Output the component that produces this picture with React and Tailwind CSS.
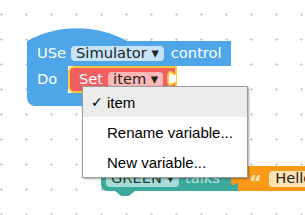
import React from "react";

const blockFont = "font-['DejaVu_Sans',sans-serif] text-[14.67px] leading-none";

function Grid() {
  return (
    <svg className="absolute inset-0" width="305" height="215">
      <defs>
        <pattern id="dots" x="-11" y="2" width="25" height="25" patternUnits="userSpaceOnUse">
          <rect x="11" y="12" width="3" height="1" fill="#cfcfcf" />
          <rect x="12" y="11" width="1" height="3" fill="#cfcfcf" />
        </pattern>
      </defs>
      <rect width="305" height="215" fill="url(#dots)" />
    </svg>
  );
}

function SetBlock() {
  return (
    <div className="relative flex h-[27px] w-[109px] items-center rounded-l-[6px] border-2 border-[#fdc93c] bg-[#ef5f5f] pl-[9px] text-white">
      <span>Set</span>
      <span className="ml-[5px] flex h-[15px] items-center rounded-[4px] bg-[#f8b8b6] px-[5px] text-[#222]">
        item&nbsp;▾
      </span>
      <svg className="absolute right-[-3px] top-[-2px]" width="12" height="27">
        <path d="M10 5 C10 15 2 -3 2 12.5 S10 10 10 20" fill="#fff" stroke="#fdc93c" strokeWidth="2" />
      </svg>
    </div>
  );
}

function UseBlock() {
  return (
    <div className={`absolute left-[27px] top-[28px] flex flex-col ${blockFont}`}>
      <svg width="100" height="13" className="block">
        <path d="M0 13 C30 -4 70 -4 100 13 Z" fill="#4ea6e8" />
      </svg>
      <div className="flex h-[25px] w-[204px] items-center bg-[#4ea6e8] pl-[10px] text-white">
        <span>USe</span>
        <span className="ml-[5px] flex h-[15px] items-center rounded-[4px] bg-[#c6e4f9] px-[5px] text-[#222]">
          Simulator&nbsp;▾
        </span>
        <span className="ml-[7px]">control</span>
      </div>
      <div className="flex">
        <div className="flex h-[27px] w-[41px] items-center bg-[#4ea6e8] pl-[10px] text-white">Do</div>
        <SetBlock />
      </div>
      <div className="h-[13px] w-[110px] rounded-bl-[8px] bg-[#4ea6e8]" />
    </div>
  );
}

function TalkBlock() {
  return (
    <div className={`absolute left-[101px] top-[166px] ${blockFont}`}>
      <div className="flex h-[25px] w-[139px] items-center rounded-l-[6px] bg-[#3ba99c] pl-[5px]">
        <span className="flex h-[16px] items-center rounded-[4px] bg-[#a6dcd5] px-[5px] text-[#1d3b38]">
          GREEN&nbsp;▾
        </span>
        <span className="ml-[6px] text-[#c2e8e3]">talks</span>
      </div>
      <svg className="absolute left-[14px] top-[25px]" width="20" height="5">
        <path d="M0 0 L5 4 Q6 5 7.5 5 L12.5 5 Q14 5 15 4 L20 0 Z" fill="#3ba99c" />
      </svg>
    </div>
  );
}

function TextBlock() {
  return (
    <div className={`absolute left-[230px] top-[166px] flex ${blockFont}`}>
      <svg width="9" height="25" className="-mr-px block">
        <path d="M9 5 C9 15 1 -3 1 12.5 S9 10 9 20 Z" fill="#fb9a16" />
      </svg>
      <div className="flex h-[25px] w-[80px] items-center bg-[#fb9a16] pl-[11px]">
        <span className="font-['DejaVu_Sans',sans-serif] text-[20px] font-bold leading-none text-[#fde4ba] pt-[6px]">“</span>
        <span className="ml-[7px] flex h-[16px] items-center rounded-[4px] bg-[#fee3b3] px-[6px] text-[#222]">
          Hello
        </span>
      </div>
    </div>
  );
}

function VariableMenu() {
  const rows = [
    { label: "item", checked: true },
    { label: "Rename variable..." },
    { label: "New variable..." },
  ];
  return (
    <div className="absolute left-[82px] top-[86px] w-[166px] border border-[#9c9c9c] bg-white font-['Liberation_Sans',Arial,sans-serif] text-[15px] leading-none text-black shadow-[1px_1px_2px_rgba(0,0,0,0.35)]">
      {rows.map((r, i) => (
        <div key={i} className={`flex h-[30px] items-center ${r.checked ? "bg-[#ececec]" : ""}`}>
          <span className="w-[24px] pl-[8px] font-['DejaVu_Sans',sans-serif] text-[14px]">{r.checked ? "✓" : ""}</span>
          <span>{r.label}</span>
        </div>
      ))}
    </div>
  );
}

export default function App() {
  return (
    <div className="relative h-[215px] w-[305px] overflow-hidden bg-white">
      <Grid />
      <UseBlock />
      <TalkBlock />
      <TextBlock />
      <VariableMenu />
    </div>
  );
}
